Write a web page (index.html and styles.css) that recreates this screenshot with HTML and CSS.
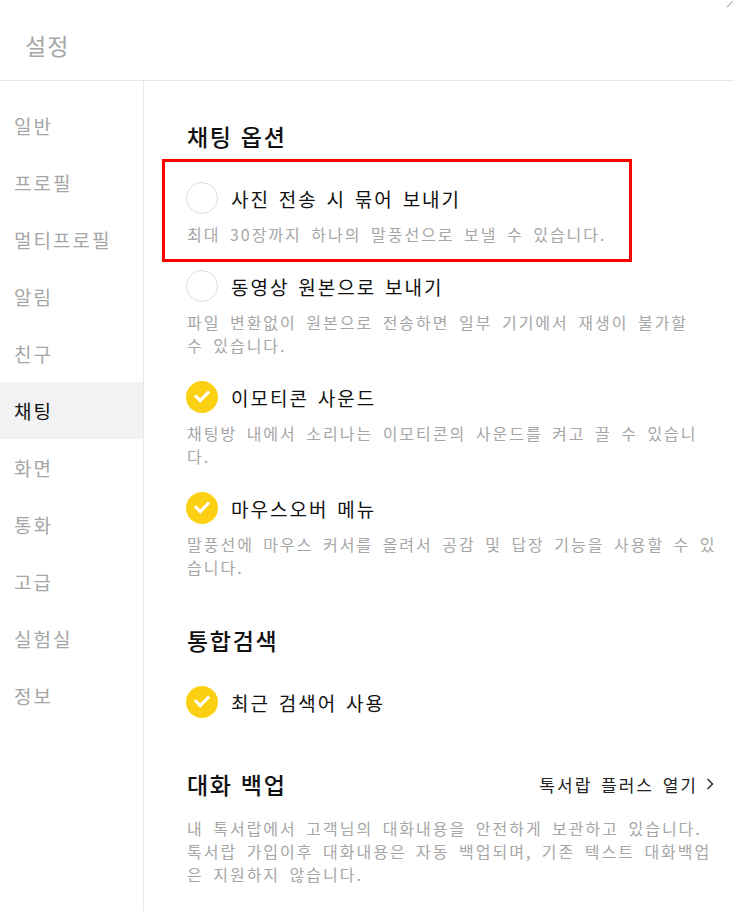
FILE: index.html
```html
<!DOCTYPE html>
<html lang="ko">
<head>
    <meta charset="UTF-8">
    <meta name="viewport" content="width=device-width, initial-scale=1.0">
    <title>설정</title>
    <link rel="stylesheet" href="styles.css">
</head>
<body>
    <div class="corner">
        <svg width="8" height="8" viewBox="0 0 8 8"><path d="M1 7 L7 1" stroke="#b5b5b5" stroke-width="1.2"/></svg>
    </div>
    <div class="header">설정</div>
    <div class="layout">
        <ul class="sidebar">
            <li>일반</li>
            <li>프로필</li>
            <li>멀티프로필</li>
            <li>알림</li>
            <li>친구</li>
            <li class="active">채팅</li>
            <li>화면</li>
            <li>통화</li>
            <li>고급</li>
            <li>실험실</li>
            <li>정보</li>
        </ul>

        <div class="content">
            <h2 class="section-title">채팅 옵션</h2>

            <div class="option highlight">
                <div class="option-row">
                    <span class="check"></span>
                    <span class="label">사진 전송 시 묶어 보내기</span>
                </div>
                <p class="desc">최대 30장까지 하나의 말풍선으로 보낼 수 있습니다.</p>
            </div>

            <div class="option">
                <div class="option-row">
                    <span class="check"></span>
                    <span class="label">동영상 원본으로 보내기</span>
                </div>
                <p class="desc">파일 변환없이 원본으로 전송하면 일부 기기에서 재생이 불가할<br>수 있습니다.</p>
            </div>

            <div class="option">
                <div class="option-row">
                    <span class="check on"></span>
                    <span class="label">이모티콘 사운드</span>
                </div>
                <p class="desc">채팅방 내에서 소리나는 이모티콘의 사운드를 켜고 끌 수 있습니<br>다.</p>
            </div>

            <div class="option">
                <div class="option-row">
                    <span class="check on"></span>
                    <span class="label">마우스오버 메뉴</span>
                </div>
                <p class="desc">말풍선에 마우스 커서를 올려서 공감 및 답장 기능을 사용할 수 있<br>습니다.</p>
            </div>

            <h2 class="section-title search-title">통합검색</h2>

            <div class="option search-option">
                <div class="option-row">
                    <span class="check on"></span>
                    <span class="label">최근 검색어 사용</span>
                </div>
            </div>

            <div class="backup-head">
                <h2 class="section-title">대화 백업</h2>
                <a class="link">톡서랍 플러스 열기
                    <svg width="10" height="14" viewBox="0 0 10 14"><path d="M2.5 2 L7.5 7 L2.5 12" fill="none" stroke="#333" stroke-width="1.5"/></svg>
                </a>
            </div>
            <p class="desc backup-desc">내 톡서랍에서 고객님의 대화내용을 안전하게 보관하고 있습니다.<br>톡서랍 가입이후 대화내용은 자동 백업되며, 기존 텍스트 대화백업<br>은 지원하지 않습니다.</p>
        </div>
    </div>
</body>
</html>
```

FILE: styles.css
```css
body {
    margin: 0;
    font-family: 'Noto Sans CJK KR', 'Noto Sans', sans-serif;
    background: white;
    color: #111;
    overflow: hidden;
}
.corner {
    position: absolute;
    top: 0;
    right: 0;
}
.corner svg {
    display: block;
}
.header {
    height: 81px;
    box-sizing: border-box;
    padding: 27px 0 0 25px;
    font-size: 23px;
    line-height: 36px;
    letter-spacing: 1px;
    color: #a6a6a6;
    border-bottom: 1px solid #e6e6e6;
}
.layout {
    display: flex;
    min-height: 830px;
}
.sidebar {
    list-style: none;
    margin: 0;
    padding: 16px 0 0 0;
    width: 143px;
    flex-shrink: 0;
    border-right: 1px solid #e6e6e6;
}
.sidebar li {
    height: 57px;
    line-height: 57px;
    padding-left: 14px;
    font-size: 19px;
    letter-spacing: 2px;
    color: #a6a6a6;
}
.sidebar li.active {
    background: #f2f2f2;
    color: #111;
}
.content {
    flex: 1;
    min-width: 0;
    padding: 37px 19px 0 43px;
}
.section-title {
    margin: 0;
    font-size: 23px;
    font-weight: 500;
    line-height: 36px;
    letter-spacing: 1.7px;
    color: #111;
}
.option {
    position: relative;
    margin-top: 24px;
}
.section-title + .option {
    margin-top: 28px;
}
.highlight::after {
    content: "";
    position: absolute;
    left: -25px;
    top: -23px;
    width: 464px;
    height: 97px;
    border: 3px solid #ff0000;
}
.option-row {
    display: flex;
    align-items: center;
    gap: 13px;
    height: 32px;
}
.check {
    width: 32px;
    height: 32px;
    box-sizing: border-box;
    border-radius: 50%;
    border: 1.5px solid #dcdcdc;
    margin-left: -1px;
    flex-shrink: 0;
    position: relative;
}
.check.on {
    border: none;
    background: #fcd012;
}
.check.on::after {
    content: "";
    position: absolute;
    top: 9px;
    left: 9px;
    width: 11px;
    height: 6px;
    border-left: 3px solid white;
    border-bottom: 3px solid white;
    transform: rotate(-45deg);
}
.label {
    font-size: 19px;
    letter-spacing: 2px;
    word-spacing: 1.5px;
    color: #111;
}
.desc {
    margin: 9px 0 0 0;
    font-size: 16px;
    line-height: 23px;
    letter-spacing: 2px;
    word-spacing: 3px;
    color: #a6a6a6;
    white-space: nowrap;
}
.search-title {
    margin-top: 43px;
}
.search-option {
    margin-top: 30px;
}
.backup-head {
    display: flex;
    justify-content: space-between;
    align-items: center;
    margin-top: 48px;
}
.link {
    display: flex;
    align-items: center;
    gap: 7px;
    font-size: 17px;
    letter-spacing: 2px;
    word-spacing: 2px;
    color: #222;
    cursor: pointer;
}
.backup-desc {
    margin-top: 15px;
}
```
